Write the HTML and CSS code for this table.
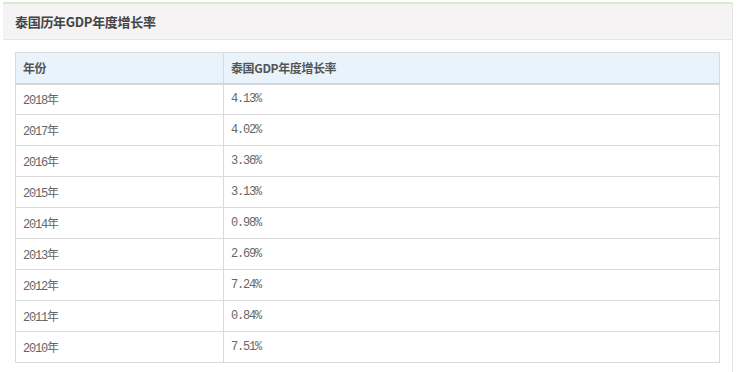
FILE: index.html
```html
<!DOCTYPE html>
<html lang="zh-CN">
<head>
<meta charset="utf-8">
<title>泰国历年GDP年度增长率</title>
<link rel="stylesheet" href="styles.css">
</head>
<body>
<div class="panel">
  <div class="panel-head">泰国历年GDP年度增长率</div>
  <div class="panel-body">
    <table class="data">
      <thead>
        <tr><th class="c1">年份</th><th>泰国GDP年度增长率</th></tr>
      </thead>
      <tbody>
        <tr><td>2018年</td><td>4.13%</td></tr>
        <tr><td>2017年</td><td>4.02%</td></tr>
        <tr><td>2016年</td><td>3.36%</td></tr>
        <tr><td>2015年</td><td>3.13%</td></tr>
        <tr><td>2014年</td><td>0.98%</td></tr>
        <tr><td>2013年</td><td>2.69%</td></tr>
        <tr><td>2012年</td><td>7.24%</td></tr>
        <tr><td>2011年</td><td>0.84%</td></tr>
        <tr><td>2010年</td><td>7.51%</td></tr>
      </tbody>
    </table>
  </div>
</div>
</body>
</html>
```
FILE: styles.css
```css
html, body {
  margin: 0;
  padding: 0;
  background: #ffffff;
}
body {
  padding-top: 2px;
  font-family: "Noto Sans CJK SC", "Liberation Sans", sans-serif;
  color: #666;
}
.panel {
  margin-left: 3px;
  width: 729px;
  height: 370px;
  border-top: 2px solid #d8ebd5;
  border-right: 1px solid #e4e4e4;
}
.panel-head {
  height: 35px;
  line-height: 35px;
  padding-left: 12px;
  background: #f5f3f4;
  border-bottom: 1px solid #e6e6e6;
  font-size: 13px;
  font-weight: bold;
  color: #444;
  letter-spacing: -0.3px;
}
.panel-body {
  padding: 12px 13px 0 12px;
}
.data {
  width: 705px;
  border-collapse: collapse;
  border: 1px solid #d6d6d6;
  font-size: 12px;
}
.data th, .data td {
  height: 31px;
  padding: 0 0 0 7px;
  text-align: left;
  border: 1px solid #dadada;
  box-sizing: border-box;
}
.data th {
  height: 31px;
  background: #e8f3fc;
  color: #555;
  font-weight: bold;
  font-size: 12px;
  letter-spacing: -0.4px;
  border-bottom: 2px solid #d2d6da;
}
.data .c1 {
  width: 208px;
}
.data td {
  font-family: "Liberation Mono", "Noto Sans CJK SC", monospace;
  font-size: 12px;
  letter-spacing: -1.2px;
  color: #666;
}
```
